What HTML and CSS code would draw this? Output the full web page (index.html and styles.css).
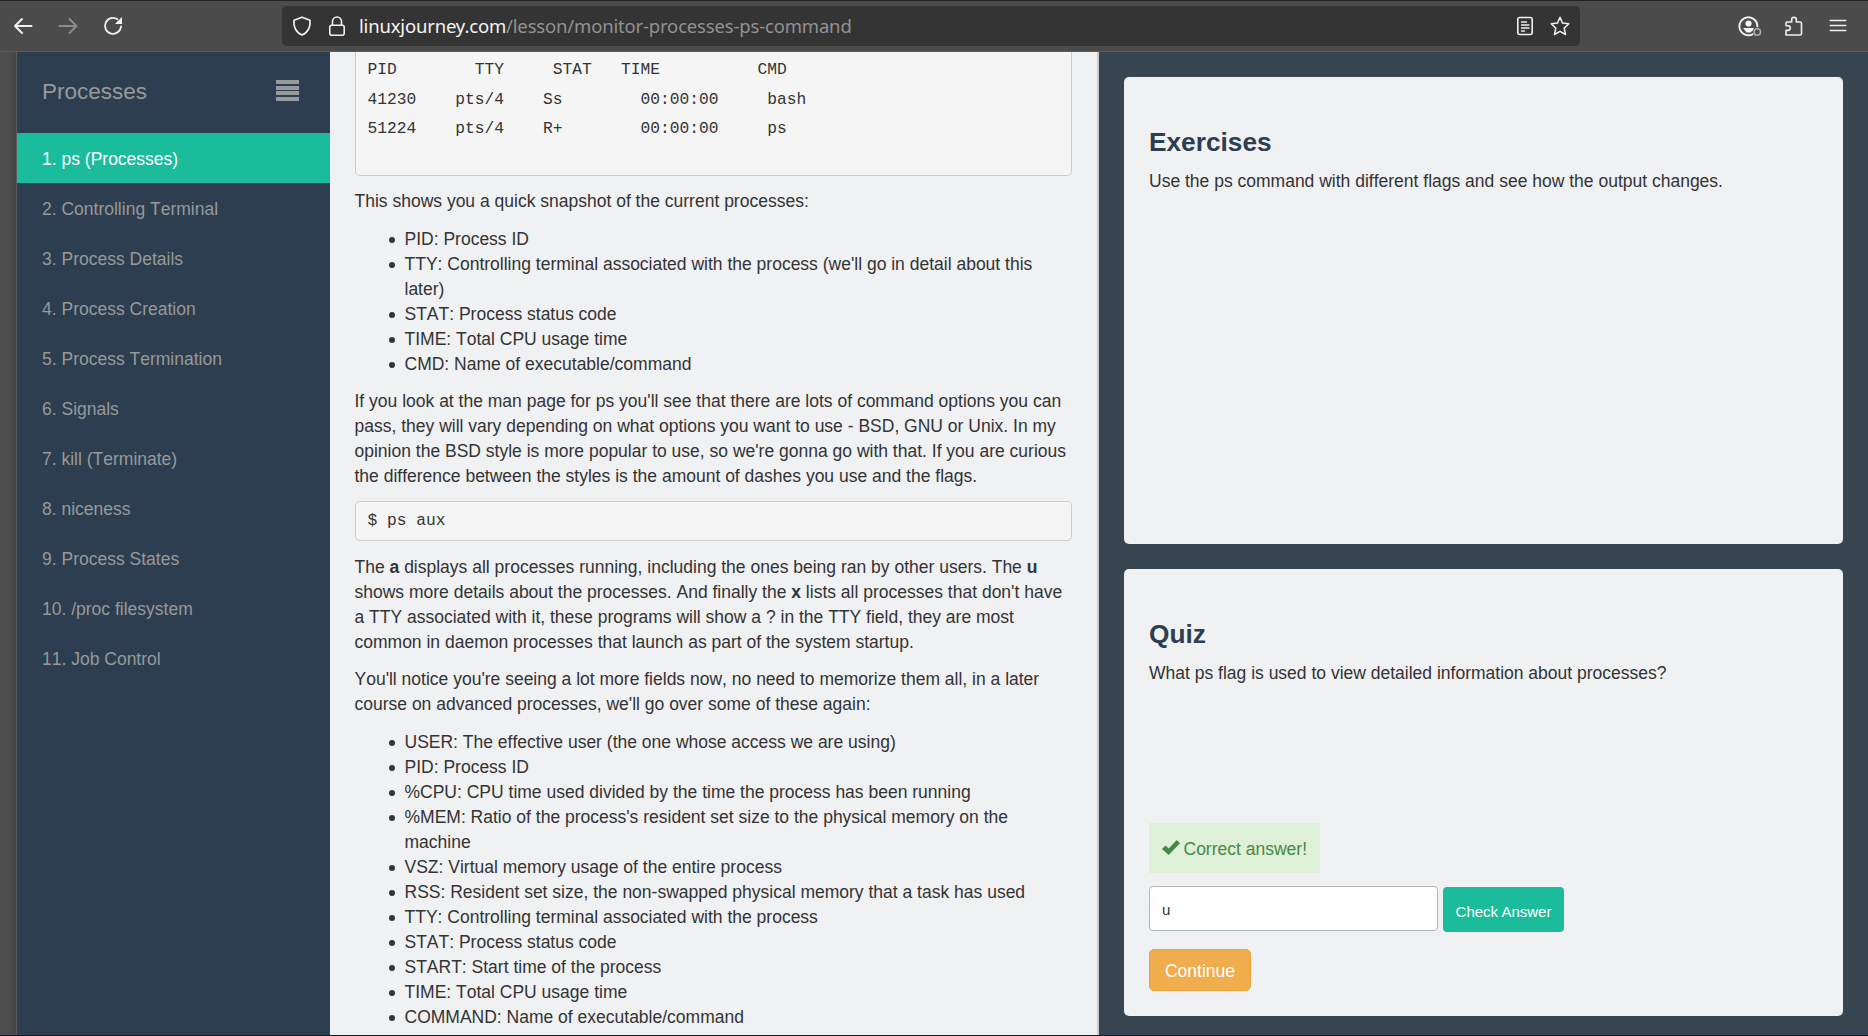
FILE: index.html
```html
<!DOCTYPE html>
<html lang="en">
<head>
<meta charset="utf-8">
<title>ps (Processes)</title>
<link rel="stylesheet" href="styles.css">
</head>
<body>
<header class="toolbar">
  <nav class="nav">
    <svg class="ico" viewBox="0 0 20 20"><path d="M18.500 10H2M9 3L2 10l7 7" stroke-width="2"/></svg>
    <svg class="ico dim" viewBox="0 0 20 20"><path d="M1.500 10h17M11.500 3l7 7-7 7" stroke-width="2"/></svg>
    <svg class="ico" viewBox="0 0 20 20"><path d="M18 10.500A8 8 0 1 1 14.500 3.200" stroke-width="1.800"/><path class="solid" d="M19 1v7h-7z"/></svg>
  </nav>
  <div class="urlbar">
    <svg class="ico" viewBox="0 0 20 20"><path d="M10 1.200L18 4.300C18.600 10 16.500 16.500 10 19 3.500 16.500 1.400 10 2 4.300z" stroke-width="1.700"/></svg>
    <svg class="ico lock" viewBox="0 0 20 20"><rect x="2.800" y="9.200" width="14.400" height="10" rx="2"/><path d="M5.500 9V5.500a4.500 4.500 0 0 1 9 0V9"/></svg>
    <span class="url"><b>linuxjourney.com</b>/lesson/monitor-processes-ps-command</span>
    <svg class="ico reader" viewBox="0 0 20 20"><rect x="2.800" y="1.500" width="14.400" height="17" rx="2"/><path d="M6.500 6h5M6.500 9h7.500M6.500 12h7.500M6.500 15h3" stroke-width="1.300"/></svg>
    <svg class="ico star" viewBox="0 0 20 20"><path d="M10 1.300l2.600 5.800 6.200.700-4.600 4.300 1.300 6.400-5.500-3.200-5.500 3.200 1.300-6.400L1.200 7.800l6.200-.700z" stroke-width="1.500"/></svg>
  </div>
  <div class="tools">
    <svg class="account" viewBox="0 0 24 22"><path d="M14.500 19.300A9 9 0 1 1 19.400 11.500" stroke-width="1.900"/><circle class="solid" cx="10.500" cy="8.500" r="3.100"/><path class="solid" d="M5 13h11l-1.500 3H14l-1.500 1.500h-4z"/><circle class="dot" cx="19.300" cy="17" r="3.200"/></svg>
    <svg class="ico puzzle" viewBox="0 0 20 20"><path d="M2 19h14.200q1.300 0 1.300-1.300V7.300q0-1.300-1.300-1.300H12.300V3.600a2.300 2.300 0 0 0-4.600 0V6H3.300Q2 6 2 7.300V9.800H4a2.300 2.300 0 0 1 0 4.600H2z"/></svg>
    <svg class="ico menu" viewBox="0 0 20 20"><path d="M2.300 4.500h15.400M2.300 9.500h15.400M2.300 14.500h15.400"/></svg>
  </div>
</header>
<main class="page">
  <aside class="sidebar">
    <div class="side-head"><span>Processes</span><i class="bars"></i></div>
    <ul class="lessons">
      <li class="active">1. ps (Processes)</li>
      <li>2. Controlling Terminal</li>
      <li>3. Process Details</li>
      <li>4. Process Creation</li>
      <li>5. Process Termination</li>
      <li>6. Signals</li>
      <li>7. kill (Terminate)</li>
      <li>8. niceness</li>
      <li>9. Process States</li>
      <li>10. /proc filesystem</li>
      <li>11. Job Control</li>
    </ul>
  </aside>
  <article class="content">
<pre class="output">PID        TTY     STAT   TIME          CMD
41230    pts/4    Ss        00:00:00     bash
51224    pts/4    R+        00:00:00     ps
</pre>
    <p>This shows you a quick snapshot of the current processes:</p>
    <ul>
      <li>PID: Process ID</li>
      <li>TTY: Controlling terminal associated with the process (we'll go in detail about this<br>later)</li>
      <li>STAT: Process status code</li>
      <li>TIME: Total CPU usage time</li>
      <li>CMD: Name of executable/command</li>
    </ul>
    <p>If you look at the man page for ps you'll see that there are lots of command options you can<br>pass, they will vary depending on what options you want to use - BSD, GNU or Unix. In my<br>opinion the BSD style is more popular to use, so we're gonna go with that. If you are curious<br>the difference between the styles is the amount of dashes you use and the flags.</p>
    <pre class="command">$ ps aux</pre>
    <p class="flags">The <strong>a</strong> displays all processes running, including the ones being ran by other users. The <strong>u</strong><br>shows more details about the processes. And finally the <strong>x</strong> lists all processes that don't have<br>a TTY associated with it, these programs will show a ? in the TTY field, they are most<br>common in daemon processes that launch as part of the system startup.</p>
    <p>You'll notice you're seeing a lot more fields now, no need to memorize them all, in a later<br>course on advanced processes, we'll go over some of these again:</p>
    <ul>
      <li>USER: The effective user (the one whose access we are using)</li>
      <li>PID: Process ID</li>
      <li>%CPU: CPU time used divided by the time the process has been running</li>
      <li>%MEM: Ratio of the process's resident set size to the physical memory on the<br>machine</li>
      <li>VSZ: Virtual memory usage of the entire process</li>
      <li>RSS: Resident set size, the non-swapped physical memory that a task has used</li>
      <li>TTY: Controlling terminal associated with the process</li>
      <li>STAT: Process status code</li>
      <li>START: Start time of the process</li>
      <li>TIME: Total CPU usage time</li>
      <li>COMMAND: Name of executable/command</li>
    </ul>
  </article>
  <section class="side-panel">
    <div class="card exercises">
      <h3>Exercises</h3>
      <p>Use the ps command with different flags and see how the output changes.</p>
    </div>
    <div class="card quiz">
      <h3>Quiz</h3>
      <p>What ps flag is used to view detailed information about processes?</p>
      <div class="result"><svg class="check" viewBox="0 0 18 15"><path d="M0 9l3.500-3.600 3.200 3.100L14.700 0 18 3.200 6.700 15z"/></svg>Correct answer!</div>
      <div class="answer">
        <input type="text" value="u">
        <button class="check-btn">Check Answer</button>
      </div>
      <button class="continue">Continue</button>
    </div>
  </section>
</main>
</body>
</html>
```
FILE: styles.css
```css
* { box-sizing: border-box; }
body {
  margin: 0;
  height: 1036px;
  overflow: hidden;
  display: flex;
  flex-direction: column;
  background: #4b4b4b;
  border-top: 1px solid #222;
  border-bottom: 1px solid #161a1e;
  font: 17.5px/25px "Liberation Sans", Arial, sans-serif;
  font-kerning: none;
  color: #333;
}
svg { fill: none; stroke: #f0f0f0; stroke-width: 1.6; stroke-linejoin: round; stroke-linecap: round; flex: none; }
.solid { fill: #f5f5f5; stroke: none; }
.ico { width: 20px; height: 20px; }
.dim { stroke: #8c8c8c; }

.toolbar {
  height: 51px;
  flex: none;
  display: flex;
  align-items: center;
  border-bottom: 1px solid #5b5b5b;
}
.nav { display: flex; gap: 25px; width: 282px; padding-left: 13px; }
.urlbar {
  width: 1298px;
  height: 40px;
  display: flex;
  align-items: center;
  padding: 0 10px;
  border-radius: 5px;
  background: #343434;
}
.lock { margin-left: 15px; }
.url {
  flex: 1;
  margin-left: 12px;
  font: 18.5px/26px "Noto Sans", sans-serif;
  letter-spacing: -0.17px;
  white-space: nowrap;
  color: #929292;
}
.url b { font-weight: 400; color: #f5f5f5; }
.star { margin-left: 15px; }
.tools { display: flex; align-items: center; margin-left: 157.5px; }
.account { width: 24px; height: 22px; }
.dot { stroke: #aaa; fill: #4b4b4b; }
.puzzle { margin-left: 22.5px; }
.menu { margin-left: 24px; }

.page { flex: 1; min-height: 0; display: flex; padding-left: 17px; background: linear-gradient(90deg, #4d4d4d 9px, #444 16px, #5b5b5b 16px); }
.sidebar { width: 313px; flex: none; background: #2c3e50; color: #999; }
.side-head {
  height: 81px;
  display: flex;
  align-items: center;
  justify-content: space-between;
  padding: 0 31px 3px 25px;
  font-size: 22.5px;
}
.bars { width: 23px; height: 21px; margin-bottom: 1px; background: repeating-linear-gradient(#999 0 4px, transparent 4px 5.67px); }
.lessons { list-style: none; margin: 0; padding: 0; }
.lessons li { height: 50px; padding: 14px 25px 11px; }
.lessons .active { background: #1abc9c; color: #fff; }

.content { width: 769px; flex: none; padding: 0 25px; background: #f0f1f3; border-right: 2px solid #ccc; overflow: hidden; white-space: nowrap; }
.content p { margin: 0 0 12.5px -0.5px; }
.content .flags { margin-bottom: 11.5px; }
.content ul { margin: 0 0 11.5px -0.5px; padding: 1px 0 0 50px; list-style: none; }
.content li::before {
  content: "";
  display: inline-block;
  width: 6px;
  height: 6px;
  margin: 0 10px 0 -16px;
  border-radius: 50%;
  vertical-align: 2px;
  background: #333;
}
pre {
  margin: 0 0 14px;
  padding: 0 11.5px;
  border: 1px solid #ccc;
  border-radius: 5px;
  background: #f5f5f5;
  font: 16.25px/29.5px "Liberation Mono", monospace;
}
.output { height: 124px; padding-top: 3px; margin-bottom: 12.75px; border-top: 0; border-top-left-radius: 0; border-top-right-radius: 0; }
.command { height: 40px; padding-top: 4px; }

.side-panel { flex: 1; display: flex; flex-direction: column; gap: 25px; padding: 25px 25px 19px; background: #364550; }
.card { display: flex; flex-direction: column; align-items: flex-start; padding: 51px 25px 25px; border-radius: 5px; background: #f0f1f3; }
.exercises { height: 467px; }
.quiz { flex: 1; }
h3 { margin: 0 0 12px; font-size: 26.25px; line-height: 29px; color: #2c3e50; }
.card p { margin: 0; }
.result { display: flex; align-items: center; height: 50px; margin-top: auto; padding: 2px 12.5px 0; background: #dff0d8; color: #468847; }
.check { width: 18px; height: 15px; margin: 0 4px 4px 0; fill: #468847; stroke: none; }
.answer { display: flex; align-items: flex-start; gap: 5px; margin-top: 13px; }
input { width: 289px; height: 45px; padding: 2px 12px 0; border: 1px solid #b5b5b5; border-radius: 4px; font: 15px "Liberation Sans", sans-serif; color: #333; background: #fff; }
button { border: 0; color: #fff; font-family: "Liberation Sans", sans-serif; padding: 0; }
.check-btn { width: 121px; height: 45px; margin-top: 1px; padding-top: 3px; border-radius: 4px; background: #1abc9c; font-size: 15px; }
.continue { width: 102px; height: 42px; margin-top: 17px; padding-top: 2px; border: 1px solid #eea236; border-radius: 5px; background: #f0ad4e; font-size: 17.5px; }
```
